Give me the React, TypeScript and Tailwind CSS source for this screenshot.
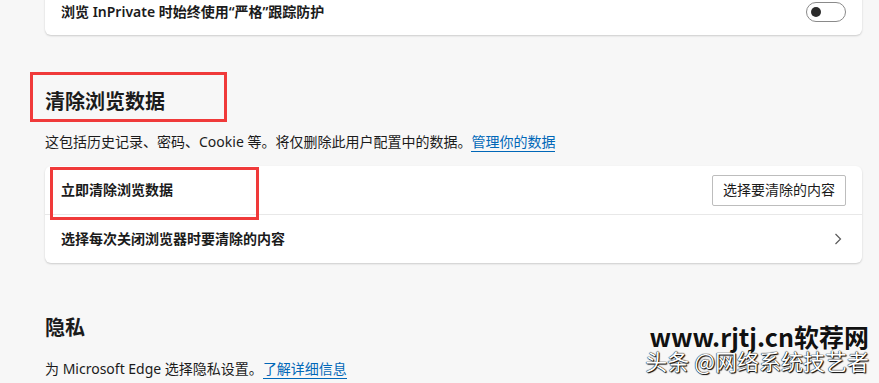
import React from 'react';

const font = "font-['Noto_Sans','Noto_Sans_CJK_SC',sans-serif]";

function Toggle() {
  return (
    <div className="w-[40px] h-[20px] rounded-full border border-[#8a8a8a] bg-white flex items-center pl-[4px]">
      <div className="w-[10px] h-[10px] rounded-full bg-[#2b2b2b]" />
    </div>
  );
}

function Chevron() {
  return (
    <svg width="8" height="12" viewBox="0 0 8 12" fill="none" stroke="#5a5a5a" strokeWidth="1.2">
      <path d="M1.5 1 L6.5 6 L1.5 11" />
    </svg>
  );
}

export default function App() {
  return (
    <div className={`relative w-full h-[383px] overflow-hidden bg-[#f7f7f7] text-[#1b1b1b] ${font}`}>
      <div className="pl-[45px] pr-[17px]">
        {/* previous card, scrolled half out of view */}
        <div className="-mt-[12px] bg-white rounded-[6px] shadow-[0_1px_2px_rgba(0,0,0,0.18)]">
          <div className="h-[47px] flex items-center justify-between pl-[16px] pr-[16px]">
            <span className="text-[14px] leading-[20px] font-semibold">浏览 InPrivate 时始终使用“严格”跟踪防护</span>
            <Toggle />
          </div>
        </div>

        {/* Clear browsing data */}
        <div className="relative mt-[52px] h-[30px] flex items-center">
          <h2 className="text-[20px] leading-[30px] font-bold">清除浏览数据</h2>
          <div className="absolute left-[-15px] top-[-15px] w-[197px] h-[50px] border-[3px] border-[#f03a3a]" />
        </div>
        <p className="mt-[15px] text-[14px] leading-[20px]">
          这包括历史记录、密码、Cookie 等。将仅删除此用户配置中的数据。
          <a className="text-[#0067b8] border-b border-[#0067b8]">管理你的数据</a>
        </p>

        <div className="mt-[14px] bg-white rounded-[6px] shadow-[0_1px_2px_rgba(0,0,0,0.18)]">
          <div className="relative h-[48px] flex items-center justify-between pl-[16px] pr-[16px]">
            <span className="text-[14px] leading-[20px] font-semibold">立即清除浏览数据</span>
            <button className="h-[31px] px-[10px] border border-[#bdbdbd] rounded-[2px] bg-white text-[14px] leading-[20px] text-[#1b1b1b]">
              选择要清除的内容
            </button>
            <div className="absolute left-[5px] top-[1px] w-[209px] h-[53px] border-[3px] border-[#f03a3a]" />
          </div>
          <div className="h-px bg-[#e8e8e8]" />
          <div className="h-[48px] flex items-center justify-between pl-[16px] pr-[20px]">
            <span className="text-[14px] leading-[20px] font-semibold">选择每次关闭浏览器时要清除的内容</span>
            <Chevron />
          </div>
        </div>

        {/* Privacy */}
        <h2 className="mt-[50px] text-[20px] leading-[30px] font-bold">隐私</h2>
        <p className="mt-[16px] text-[14px] leading-[20px]">
          为 Microsoft Edge 选择隐私设置。
          <a className="text-[#0067b8] border-b border-[#0067b8]">了解详细信息</a>
        </p>
      </div>

      {/* watermark */}
      <div className="absolute right-[10px] top-[325px] flex flex-col items-end font-['Noto_Sans_CJK_SC',sans-serif]">
        <span className="text-[25px] leading-[23px] font-bold text-[#111] [text-shadow:0_0_2px_#fff]">www.rjtj.cn软荐网</span>
        <span className="text-[22px] leading-[24px] text-white [text-shadow:0_0_1px_#000,0_0_1px_#000,1px_1px_1px_#000]">头条 @网络系统技艺者</span>
      </div>
    </div>
  );
}
